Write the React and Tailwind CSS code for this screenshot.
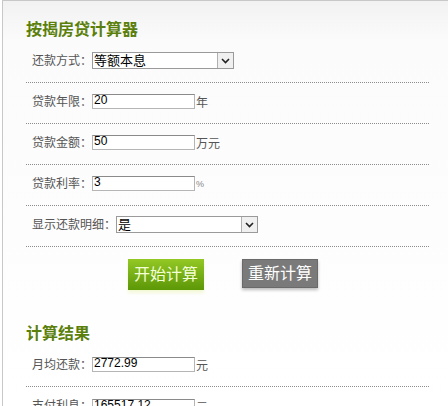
import React from 'react'

const font = { fontFamily: '"Liberation Sans", "Noto Sans CJK SC", sans-serif' }

const TextBox = ({ value }) => (
    <span className="inline-block w-[103px] h-[15px] border border-[#b5b5b5] border-t-[#8a8a8a] bg-white text-[12px] leading-[11px] text-black pl-[1px] align-middle">
        {value}
    </span>
)

const SelectBox = ({ value }) => (
    <span className="inline-flex w-[142px] h-[17px] border border-[#9a9a9a] bg-white align-middle">
        <span className="flex-1 text-[13px] leading-[15px] text-black pl-[1px]">{value}</span>
        <span className="w-[16px] h-[15px] border-l border-[#b0b0b0] bg-[#f0f0f0] flex items-center justify-center">
            <svg width="9" height="6" viewBox="0 0 9 6">
                <path d="M1 1 L4.5 4.5 L8 1" stroke="#222" strokeWidth="1.6" fill="none" />
            </svg>
        </span>
    </span>
)

const Row = ({ label, children, last }) => (
    <div className={`h-[41px] flex items-center pl-[6px] pb-[3px] ${last ? '' : 'border-b border-dotted border-[#8c8c8c]'}`}>
        <span className="text-[12px] text-[#555]">{label}</span>
        {children}
    </div>
)

const Unit = ({ children, small }) => (
    <span className={`${small ? 'text-[9px] text-[#888]' : 'text-[12px] text-[#555]'} ml-[1px] mt-[3px]`}>{children}</span>
)

export default function App() {
    return (
        <div style={font} className="w-[448px] h-[406px] overflow-hidden bg-white">
            <div className="ml-[2px] h-full border-l border-t border-[#c8c8c8] bg-gradient-to-b from-[#f2f2f2] via-[#fbfbfb] via-[10%] to-white">
                <div className="w-[403px] ml-[23px]">
                    <h2 className="h-[41px] pt-[20px] text-[16px] leading-[18px] font-bold text-[#5b7f0b]">按揭房贷计算器</h2>
                    <Row label="还款方式：">
                        <SelectBox value="等额本息" />
                    </Row>
                    <Row label="贷款年限：">
                        <TextBox value="20" />
                        <Unit>年</Unit>
                    </Row>
                    <Row label="贷款金额：">
                        <TextBox value="50" />
                        <Unit>万元</Unit>
                    </Row>
                    <Row label="贷款利率：">
                        <TextBox value="3" />
                        <Unit small>%</Unit>
                    </Row>
                    <Row label="显示还款明细：">
                        <SelectBox value="是" />
                    </Row>
                    <div className="flex pl-[102px] pt-[12px] gap-[38px] h-[78px]">
                        <button className="w-[76px] h-[31px] bg-gradient-to-b from-[#93c824] to-[#5c9706] text-[#f4ffd8] text-[16px] shadow-[0_3px_3px_#f3f8d8]">开始计算</button>
                        <button className="w-[76px] h-[29px] bg-[#7a7a7a] border border-[#6a6a6a] text-white text-[16px] shadow-[0_2px_3px_#bbb]">重新计算</button>
                    </div>
                    <h2 className="h-[21px] text-[16px] leading-[18px] font-bold text-[#5b7f0b]">计算结果</h2>
                    <Row label="月均还款：">
                        <TextBox value="2772.99" />
                        <Unit>元</Unit>
                    </Row>
                    <Row label="支付利息：" last>
                        <TextBox value="165517.12" />
                        <Unit>元</Unit>
                    </Row>
                </div>
            </div>
        </div>
    )
}
